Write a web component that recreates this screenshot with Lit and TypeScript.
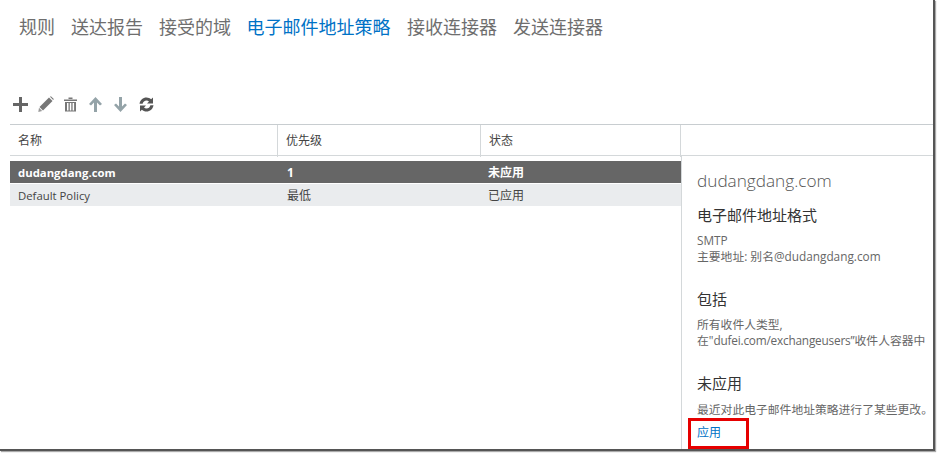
import { LitElement, html, css } from "lit";
import { customElement } from "lit/decorators.js";

const tabs = ["规则", "送达报告", "接受的域", "电子邮件地址策略", "接收连接器", "发送连接器"];

@customElement("app-root")
export class AppRoot extends LitElement {
  static styles = css`
    :host { display: block; width: 937px; height: 453px; background: #fff; font-family: "Open Sans", "Noto Sans CJK SC", sans-serif; font-size: 12px; color: #444; overflow: hidden; }
    .frame { position: relative; box-sizing: border-box; width: 935px; height: 451px; background: #fff; border-right: 2px solid #555; border-bottom: 2px solid #555; box-shadow: 1px 1px 1px #aaa; display: flex; flex-direction: column; overflow: hidden; }
    nav { display: flex; gap: 16px; padding: 15px 0 0 19px; font-size: 18px; line-height: 24px; color: #6e6e6e; height: 39px; flex: none; }
    nav .on { color: #0072c6; margin-left: -0.5px; margin-right: 0.5px; }
    .tools { display: flex; align-items: center; gap: 10px; margin: 42px 0 0 13px; height: 16px; flex: none; }
    .tools svg { display: block; flex: none; }
    .head { display: grid; grid-template-columns: 268px 203px 200px 1fr; margin: 12px 0 0 10px; height: 30px; border-top: 1px solid #c8cdd0; border-bottom: 1px solid #d4d8da; flex: none; }
    .head div { padding-left: 8px; line-height: 32px; border-right: 1px solid #d4d8da; font-size: 12px; color: #444; }
    .head div:last-child { border-right: 0; }
    .body { display: flex; flex: 1; min-height: 0; }
    .list { width: 671px; margin-left: 10px; padding-top: 5px; flex: none; }
    .row { display: grid; grid-template-columns: 269px 201px 1fr; height: 22px; line-height: 24px; padding-left: 8px; margin-bottom: 1px; background: #eaecee; color: #444; }
    .row.sel { background: #666; color: #fff; font-weight: 700; }
    .lat { font-size: 11.35px; }
    .panel { flex: 1; border-left: 1px solid #d4d8da; padding: 14px 0 0 15px; color: #666; white-space: nowrap; line-height: 16px; }
    .title { font-size: 17.2px; font-weight: 300; line-height: 22px; color: #555; }
    h3 { margin: 0; font-size: 15px; font-weight: 400; line-height: 20px; color: #333; }
    .t1 { margin-top: 13px; }
    .t2 { margin-top: 25px; }
    .t3 { margin-top: 25px; }
    p { margin: 7px 0 0; font-size: 11.8px; }
    .tight { letter-spacing: -0.2px; }
    p.last { margin-top: 7.5px; }
    .apply { display: block; margin-top: 8.5px; color: #0072c6; text-decoration: none; font-size: 12px; }
    .mark { position: absolute; left: 688px; top: 418px; width: 61px; height: 31px; box-sizing: border-box; border: 3px solid #e60000; }
  `;

  render() {
    return html`<div class="frame">
      <nav>${tabs.map((t, i) => html`<span class=${i === 3 ? "on" : ""}>${t}</span>`)}</nav>
      <div class="tools">
        <svg width="15" height="15" viewBox="0 0 15 15"><path d="M6 0h3v6h6v3H9v6H6V9H0V6h6z" fill="#666"/></svg>
        <svg width="16" height="16" viewBox="0 0 16 16"><path d="M11 1.500l3.500 3.500L5 14.500 1.500 11z" fill="#777"/><path d="M12 .8l.9-.6 2.900 2.900-.6.9z" fill="#777"/><path d="M1 11.800l3.200 3.200-3.900 1z" fill="#999"/></svg>
        <svg width="13" height="15" viewBox="0 0 13 15"><path d="M0 2.500h13v1.500H0zM4.500.5h4v1.500h-4z" fill="#777"/><path d="M1 5h11v9.500H1zM3 6v7.500h1.500V6zM5.800 6v7.500h1.500V6zM8.600 6v7.500h1.500V6z" fill="#777" fill-rule="evenodd"/></svg>
        <svg style="margin-left:2px" width="13" height="15" viewBox="0 0 13 15"><path d="M6.500 0L13 7l-2 1.600-3-3.200V15H5V5.400L2 8.600 0 7z" fill="#94a3a8"/></svg>
        <svg style="margin-left:2px" width="13" height="15" viewBox="0 0 13 15"><path d="M6.500 15L13 8l-2-1.600-3 3.200V0H5v9.600L2 6.400 0 8z" fill="#94a3a8"/></svg>
        <svg style="margin-left:2px" width="15" height="15" viewBox="0 0 15 15"><path d="M.5 6.800C1 3 4 .5 7.500.5c1.800 0 3.400.7 4.600 1.800L14 .5v6H8l2-2c-.7-.6-1.600-1-2.500-1-1.900 0-3.500 1.300-3.900 3.300z" fill="#555"/><path d="M14.500 8.200C14 12 11 14.500 7.500 14.500c-1.800 0-3.400-.7-4.600-1.800L1 14.500v-6h6l-2 2c.7.600 1.600 1 2.500 1 1.900 0 3.500-1.300 3.900-3.300z" fill="#555"/></svg>
      </div>
      <div class="head"><div>名称</div><div>优先级</div><div>状态</div><div></div></div>
      <div class="body">
        <div class="list">
          <div class="row sel"><div class="lat">dudangdang.com</div><div>1</div><div>未应用</div></div>
          <div class="row"><div class="lat">Default Policy</div><div>最低</div><div>已应用</div></div>
        </div>
        <div class="panel">
          <div class="title">dudangdang.com</div>
          <h3 class="t1">电子邮件地址格式</h3>
          <p>SMTP<br />主要地址: 别名@dudangdang.com</p>
          <h3 class="t2">包括</h3>
          <p>所有收件人类型,<br />在"<span class="tight">dufei.com/exchangeusers</span>”收件人容器中</p>
          <h3 class="t3">未应用</h3>
          <p class="last">最近对此电子邮件地址策略进行了某些更改。</p>
          <a class="apply" href="#">应用</a>
        </div>
      </div>
      <div class="mark"></div>
    </div>`;
  }
}
